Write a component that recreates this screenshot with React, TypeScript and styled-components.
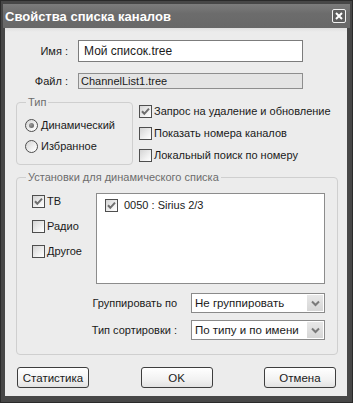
import { FC, ReactNode } from 'react'
import styled, { createGlobalStyle } from 'styled-components'

const GlobalStyle = createGlobalStyle`
  html, body {
    margin: 0;
    padding: 0;
    background: #3c3c3c;
  }
  * {
    box-sizing: border-box;
  }
`

const CheckMark: FC = () => (
  <svg width="13" height="13" viewBox="0 0 13 13">
    <polyline points="3,6.3 5.3,8.8 10,3.6" fill="none" stroke="#6e6e6e" strokeWidth="2" />
  </svg>
)

const CheckBox: FC<{ checked?: boolean; children?: ReactNode }> = ({ checked, children }) => (
  <CheckRow>
    <Box>{checked && <CheckMark />}</Box>
    {children && <span>{children}</span>}
  </CheckRow>
)

const Radio: FC<{ checked?: boolean; children: ReactNode }> = ({ checked, children }) => (
  <RadioRow>
    <Circle>{checked && <Dot />}</Circle>
    <span>{children}</span>
  </RadioRow>
)

const Select: FC<{ value: string }> = ({ value }) => (
  <SelectBox>
    <SelectValue>{value}</SelectValue>
    <ArrowButton>
      <svg width="9" height="7" viewBox="0 0 9 7">
        <polyline points="1,1.5 4.5,5 8,1.5" fill="none" stroke="#7a7a7a" strokeWidth="2" />
      </svg>
    </ArrowButton>
  </SelectBox>
)

const App: FC = () => {
  return (
    <>
      <GlobalStyle />
      <Window>
        <TitleBar>
          <Title>Свойства списка каналов</Title>
          <CloseButton>
            <svg width="8" height="8" viewBox="0 0 8 8">
              <path d="M1 1 L7 7 M7 1 L1 7" stroke="#ffffff" strokeWidth="2" />
            </svg>
          </CloseButton>
        </TitleBar>
        <Body>
          <FieldRow $height={22}>
            <FieldLabel>Имя :</FieldLabel>
            <TextInput>Мой список.tree</TextInput>
          </FieldRow>
          <FieldRow $height={16} $gap={11}>
            <FieldLabel>Файл :</FieldLabel>
            <TextInput $readOnly>ChannelList1.tree</TextInput>
          </FieldRow>
          <Middle>
            <TypeGroup>
              <Legend $offset={1}>Тип</Legend>
              <Radio checked>Динамический</Radio>
              <Radio>Избранное</Radio>
            </TypeGroup>
            <OptionColumn>
              <CheckBox checked>Запрос на удаление и обновление</CheckBox>
              <CheckBox>Показать номера каналов</CheckBox>
              <CheckBox>Локальный поиск по номеру</CheckBox>
            </OptionColumn>
          </Middle>
          <DynamicGroup>
            <Legend $offset={-6}>Установки для динамического списка</Legend>
            <DynamicTop>
              <KindColumn>
                <CheckBox checked>ТВ</CheckBox>
                <CheckBox>Радио</CheckBox>
                <CheckBox>Другое</CheckBox>
              </KindColumn>
              <ListBox>
                <CheckBox checked>0050 : Sirius 2/3</CheckBox>
              </ListBox>
            </DynamicTop>
            <SelectRow $gap={9}>
              <SelectLabel>Группировать по</SelectLabel>
              <Select value="Не группировать" />
            </SelectRow>
            <SelectRow $gap={7}>
              <SelectLabel>Тип сортировки :</SelectLabel>
              <Select value="По типу и по имени" />
            </SelectRow>
          </DynamicGroup>
          <ButtonRow>
            <Button>Статистика</Button>
            <Button>OK</Button>
            <Button>Отмена</Button>
          </ButtonRow>
        </Body>
      </Window>
    </>
  )
}

const Window = styled.div`
  width: 353px;
  height: 403px;
  display: flex;
  flex-direction: column;
  padding: 3px 2px 6px 2px;
  background: #474747;
  border: 1px solid #2a2a2a;
  font-family: 'Liberation Sans', Arial, sans-serif;
  font-size: 11px;
  color: #1a1a1a;
`

const TitleBar = styled.div`
  height: 24px;
  display: flex;
  align-items: center;
  justify-content: space-between;
  padding: 0 4px 0 2px;
  background: linear-gradient(#7c7c7c, #6c6c6c 40%, #686868);
`

const Title = styled.div`
  color: #ffffff;
  font-weight: bold;
  font-size: 13px;
`

const CloseButton = styled.div`
  width: 14px;
  height: 14px;
  display: flex;
  align-items: center;
  justify-content: center;
  border: 1px solid #f2f2f2;
  border-radius: 2px;
  background: #5e5e5e;
`

const Body = styled.div`
  flex: 1;
  display: flex;
  flex-direction: column;
  margin: 0 3px 0 2px;
  padding: 12px 9px 0 11px;
  background: linear-gradient(#e0e0e0, #ececec 4px);
`

const FieldRow = styled.div<{ $height: number; $gap?: number }>`
  display: flex;
  align-items: center;
  height: ${(p) => p.$height}px;
  margin-top: ${(p) => p.$gap ?? 0}px;
`

const FieldLabel = styled.div`
  width: 52px;
  margin-right: 10px;
  text-align: right;
`

const TextInput = styled.div<{ $readOnly?: boolean }>`
  width: 225px;
  height: 100%;
  display: flex;
  align-items: center;
  padding-left: ${(p) => (p.$readOnly ? 2 : 5)}px;
  border: 1px solid ${(p) => (p.$readOnly ? '#8e8e8e' : '#7c7c7c')};
  background: ${(p) => (p.$readOnly ? '#e4e4e4' : '#ffffff')};
  font-size: ${(p) => (p.$readOnly ? 11 : 12)}px;
`

const Middle = styled.div`
  display: flex;
  margin-top: 6px;
  gap: 6px;
`

const Group = styled.fieldset`
  margin: 0;
  min-width: 0;
  border: 1px solid #cfcfcf;
  border-radius: 4px;
`

const TypeGroup = styled(Group)`
  width: 117px;
  height: 70px;
  display: flex;
  flex-direction: column;
  gap: 7px;
  padding: 9px 0 0 8px;
`

const Legend = styled.legend<{ $offset: number }>`
  margin-left: ${(p) => p.$offset}px;
  padding: 0 2px;
  line-height: 14px;
  color: #6c6c6c;
`

const OptionColumn = styled.div`
  display: flex;
  flex-direction: column;
  gap: 8px;
  padding-top: 9px;
`

const CheckRow = styled.div`
  display: flex;
  align-items: center;
  gap: 2px;
  height: 14px;
  white-space: nowrap;
`

const Box = styled.div`
  width: 13px;
  height: 13px;
  flex: none;
  border: 1px solid #4e4e4e;
  background: linear-gradient(135deg, #d4d4d4, #f4f4f4 70%, #ffffff);
  display: flex;
  align-items: center;
  justify-content: center;
  svg {
    margin: -1px;
  }
`

const RadioRow = styled.div`
  display: flex;
  align-items: center;
  gap: 3px;
  height: 14px;
`

const Circle = styled.div`
  width: 13px;
  height: 13px;
  border-radius: 50%;
  border: 1px solid #4e4e4e;
  background: linear-gradient(135deg, #d4d4d4, #f6f6f6 70%, #ffffff);
  display: flex;
  align-items: center;
  justify-content: center;
`

const Dot = styled.div`
  width: 5px;
  height: 5px;
  border-radius: 50%;
  background: radial-gradient(circle at 35% 35%, #9a9a9a, #5a5a5a);
`

const DynamicGroup = styled(Group)`
  height: 185px;
  margin-top: 5px;
  padding: 9px 12px 0 15px;
  display: flex;
  flex-direction: column;
`

const DynamicTop = styled.div`
  display: flex;
`

const KindColumn = styled.div`
  width: 64px;
  display: flex;
  flex-direction: column;
  gap: 11px;
  padding-top: 1px;
`

const ListBox = styled.div`
  width: 229px;
  height: 91px;
  border: 1px solid #8c8c8c;
  background: #ffffff;
  padding: 4px 0 0 8px;
  ${CheckRow} {
    gap: 6px;
  }
`

const SelectRow = styled.div<{ $gap: number }>`
  display: flex;
  align-items: center;
  justify-content: flex-end;
  margin-top: ${(p) => p.$gap}px;
`

const SelectLabel = styled.div`
  margin-right: 14px;
  white-space: nowrap;
`

const SelectBox = styled.div`
  width: 134px;
  height: 20px;
  display: flex;
  align-items: center;
  border: 1px solid #8a8a8a;
  background: #ffffff;
  padding: 1px;
`

const SelectValue = styled.div`
  flex: 1;
  padding-left: 2px;
  font-size: 11.5px;
`

const ArrowButton = styled.div`
  width: 16px;
  height: 100%;
  display: flex;
  align-items: center;
  justify-content: center;
  background: linear-gradient(#e8e8e8, #d6d6d6);
`

const ButtonRow = styled.div`
  display: flex;
  justify-content: space-between;
  margin-top: 12px;
  padding: 0 2px 0 1px;
`

const Button = styled.div`
  width: 72px;
  height: 21px;
  display: flex;
  align-items: center;
  justify-content: center;
  border: 1px solid #3e3e3e;
  border-radius: 3px;
  background: linear-gradient(#ffffff, #f2f2f2 60%, #e2e2e2);
  font-size: 11.5px;
`

export default App
